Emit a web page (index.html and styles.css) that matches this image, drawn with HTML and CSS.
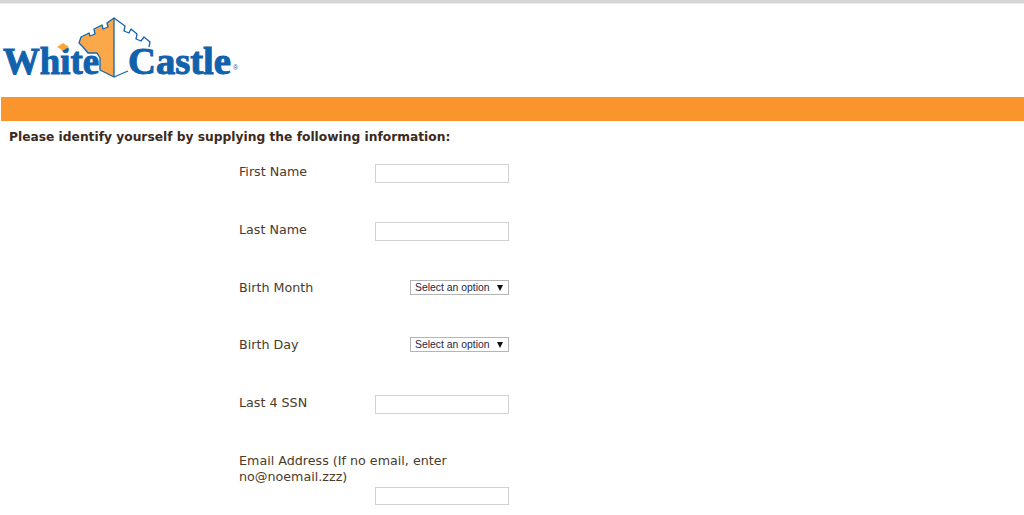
FILE: index.html
```html
<!DOCTYPE html>
<html lang="en">
<head>
<meta charset="utf-8">
<title>White Castle</title>
<link rel="stylesheet" href="styles.css">
</head>
<body>
<div class="topline"></div>
<header class="logo-area">
<svg class="logo" width="240" height="94" viewBox="0 0 240 94" aria-label="White Castle">
<path class="wall-left" d="M114 14 L107 19 L108 23 L103 25 L102 21 L94 25 L95 30 L90 32 L89 29 L81 33 L79 39 L83 43 L88 49 L97 49 L100 54 L100 66 L114 73 Z"/>
<path class="wall-right" d="M114 14 L125 22 L124 27 L129 29 L131 25 L137 30 L136 35 L141 37 L144 33 L150 38 L149 43"/>
<path class="wall-right" d="M114 73 L128 67"/>
<text class="wordmark" x="3" y="70" textLength="96" lengthAdjust="spacingAndGlyphs">White</text>
<text class="wordmark" x="128" y="70" textLength="103" lengthAdjust="spacingAndGlyphs">Castle</text>
<path class="diamond" d="M63 39 L69 43 L63 46.5 L57 43 Z"/>
<text class="reg" x="233" y="66">®</text>
</svg>
</header>
<div class="band"></div>
<h1 class="intro">Please identify yourself by supplying the following information:</h1>
<form class="form">
<div class="row">
<label class="label">First Name</label>
<input class="text-input" type="text">
</div>
<div class="row">
<label class="label">Last Name</label>
<input class="text-input" type="text">
</div>
<div class="row">
<label class="label">Birth Month</label>
<span class="select-wrap"><select class="select"><option>Select an option</option></select></span>
</div>
<div class="row">
<label class="label">Birth Day</label>
<span class="select-wrap"><select class="select"><option>Select an option</option></select></span>
</div>
<div class="row">
<label class="label">Last 4 SSN</label>
<input class="text-input" type="text">
</div>
<div class="row row-stacked">
<label class="label">Email Address (If no email, enter no@noemail.zzz)</label>
<input class="text-input" type="text">
</div>
</form>
</body>
</html>
```
FILE: styles.css
```css
html, body {
  margin: 0;
  padding: 0;
  background: #fff;
  overflow: hidden;
}
body {
  height: 515px;
  font-family: "DejaVu Sans", sans-serif;
  color: #4a3b2c;
}
.topline {
  height: 3px;
  background: #d6d6d6;
  border-bottom: 1px solid #ececec;
}
.logo-area {
  height: 93px;
}
.logo {
  display: block;
}
.wall-left {
  fill: #fba84a;
  stroke: #1565ae;
  stroke-width: 1.3;
  stroke-linejoin: round;
}
.wall-right {
  fill: none;
  stroke: #1565ae;
  stroke-width: 1.3;
  stroke-linejoin: round;
}
.diamond {
  fill: #fba630;
}
.wordmark {
  font-family: "Liberation Serif", serif;
  font-weight: 700;
  font-size: 38px;
  fill: #1162ad;
  stroke: #1162ad;
  stroke-width: 1;
}
.reg {
  font-family: "Liberation Sans", sans-serif;
  font-size: 7px;
  fill: #1565ae;
}
.band {
  height: 24px;
  margin-left: 1px;
  background: #fa942c;
}
.intro {
  margin: 9px 0 0 9px;
  font-size: 12.25px;
  line-height: 15px;
  font-weight: 700;
  color: #3b2a1e;
}
.form {
  display: flex;
  flex-direction: column;
  width: 270px;
  margin: 19px 0 0 239px;
}
.row {
  display: flex;
  justify-content: space-between;
  align-items: flex-start;
  height: 19px;
  margin-bottom: 38.75px;
}
.row-stacked {
  flex-direction: column;
  height: auto;
  margin: 0;
}
.label {
  font-size: 12.7px;
  line-height: 15px;
}
.row-stacked .label {
  line-height: 16px;
}
.row-stacked .text-input {
  align-self: flex-end;
  margin-top: 2px;
  height: 18.5px;
}
.text-input {
  box-sizing: border-box;
  width: 134px;
  height: 19px;
  margin: 0;
  padding: 0;
  background: #fff;
  border: 1px solid #d2d2d2;
}
.select-wrap {
  position: relative;
  display: block;
  width: 99px;
  height: 15px;
}
.select-wrap::after {
  content: "";
  position: absolute;
  top: 5px;
  right: 6px;
  border-left: 3px solid transparent;
  border-right: 3px solid transparent;
  border-top: 6px solid #111;
  pointer-events: none;
}
.select {
  display: block;
  box-sizing: border-box;
  width: 99px;
  height: 15px;
  margin: 0;
  padding: 0 0 0 4px;
  appearance: none;
  background: #fff;
  border: 1px solid #b5b5b5;
  border-radius: 0;
  font-family: "Liberation Sans", sans-serif;
  font-size: 10.4px;
  line-height: 13px;
  color: #2b2440;
}
```
